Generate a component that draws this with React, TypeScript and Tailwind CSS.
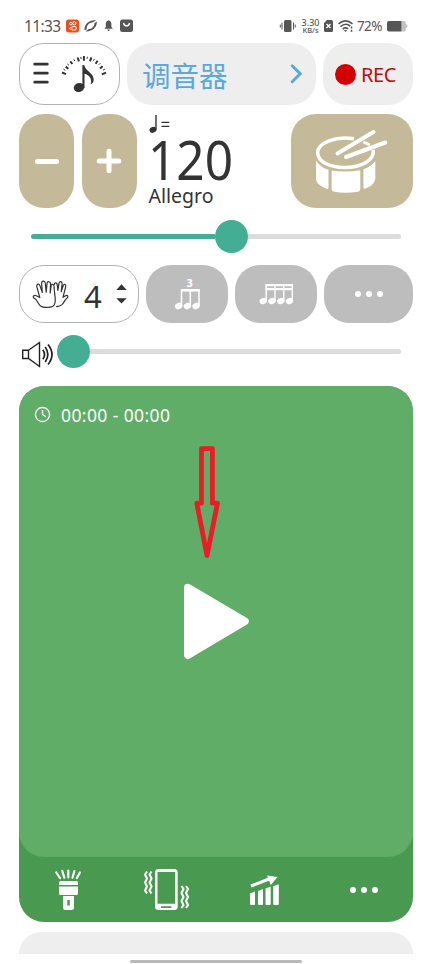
import type { ReactNode } from "react";
import clsx from "clsx";

type IconProps = {
  box: string;
  className: string;
  children: ReactNode;
};

// every drawing keeps its own coordinates, the box says which part is shown
function Icon({ box, className, children }: IconProps) {
  return (
    <svg viewBox={box} className={clsx("shrink-0", className)} fill="currentColor">
      {children}
    </svg>
  );
}

function StatusBar() {
  return (
    <div className="flex h-[43px] items-start pl-6 pt-4 text-[#565656]">
      <span className="w-[42px] whitespace-nowrap text-[15.5px] leading-5 tracking-[-0.65px]">11:33</span>
      <Icon box="66 16 70 20" className="h-5 w-[70px]">
        <rect x="66" y="19.5" width="13" height="13" rx="2.5" fill="#ef4d1b" />
        <g fill="none" stroke="white" strokeWidth="1">
          <circle cx="71" cy="23.6" r="1.3" />
          <circle cx="74.4" cy="23.3" r="1.6" />
          <rect x="71.8" y="26.6" width="4.4" height="3.4" rx="1" />
          <path d="M71.5 27.2 L69 28.4 L71.5 29.7" />
        </g>
        <path d="M84.5 30.5 C84 24 90 19.5 96 20.5 L93 22.3 C89 22.3 86.3 26 86.8 29.2Z M96.8 21.5 C97.3 27 92 32 85.5 31.4 L88.3 29.3 C92 29.3 94.6 26 94.4 23.3Z" />
        <path d="M108.6 20.2 C110.8 20.8 111.4 22.5 111.4 24.5 V27 L112.8 28.7 H104.4 L105.8 27 V24.5 C105.8 22.5 106.4 20.8 108.6 20.2Z M107.3 29.5 H109.9 L109.2 31 H108Z" />
        <rect x="120" y="19.5" width="13" height="12.5" rx="2.5" />
        <path d="M123.5 23 C124.5 26.8 128.7 26.8 129.6 23" fill="none" stroke="white" strokeWidth="1.4" />
      </Icon>
      <Icon box="279 16 18 20" className="ml-[143px] h-5 w-[18px]">
        <rect x="284" y="20" width="7.5" height="12" rx="1.5" />
        <path d="M282 22.5 V29.5 M280.3 24.5 V27.5 M293.5 22.5 V29.5 M295.2 24.5 V27.5" stroke="currentColor" strokeWidth="1" />
      </Icon>
      <div className="ml-[2px] mt-[1.5px] w-[23px] whitespace-nowrap text-center text-[9px] font-medium leading-[9px]">
        <div>3.30</div>
        <div className="text-[7.5px] leading-[7px]">KB/s</div>
      </div>
      <Icon box="322 16 34 20" className="h-5 w-[34px]">
        <path d="M327 20 H331.5 Q333 20 333 21.5 V30.5 Q333 32 331.5 32 H325.5 Q324 32 324 30.5 V23Z" />
        <path d="M326.5 24 L330.5 28 M330.5 24 L326.5 28" stroke="white" strokeWidth="1.3" />
        <g fill="none" stroke="currentColor" strokeWidth="1.6">
          <path d="M338.5 23.8 Q345.5 17.8 352.5 23.8" />
          <path d="M340.5 26.6 Q345.5 22.3 350.3 26" />
          <path d="M342.7 29 Q345.5 26.8 348.2 28.8" />
        </g>
        <path d="M343.8 30 L345.5 32 L347.2 30Z" />
        <path d="M351.5 26.5 V31.8" stroke="currentColor" strokeWidth="1.6" strokeDasharray="2 1.2" />
      </Icon>
      <span className="ml-[1px] w-[29px] whitespace-nowrap text-[13.5px] leading-[21px] tracking-[-0.6px]">72%</span>
      <Icon box="386 16 22 20" className="h-5 w-[22px]">
        <path d="M403 21 H404 Q405.8 21 405.8 23 V24.3 Q407.5 24.5 407.5 26 Q407.5 27.8 405.8 28 V29.5 Q405.8 31.5 404 31.5 H401.5 V21Z" fill="#c2c2c2" />
        <path d="M389 21 H401.5 V31.5 H389 Q387 31.5 387 29.5 V23 Q387 21 389 21Z" />
      </Icon>
    </div>
  );
}

function Header() {
  return (
    <div className="flex h-[62px] gap-[7px]">
      <button className="flex w-[101px] items-center rounded-[25px] border-[1.5px] border-[#b3b3b3] pl-[9px] text-[#333]">
        <Icon box="29 48 84 52" className="h-[52px] w-[84px]">
          <path d="M34.7 64.2 H47.3 M34.7 73.2 H47.3 M34.7 82.2 H47.3" stroke="currentColor" strokeWidth="2.8" strokeLinecap="round" />
          <g stroke="currentColor">
            <path d="M62 72.5 L66 74.2 M65.7 66.6 L68.3 68.7 M70.3 61.3 L72.4 64 M77.6 57.5 L79 61.3 M83.9 56 V60.8 M91.4 57.3 L90 61.3 M97.6 60.8 L95.6 63.7 M102.6 66.2 L100 68.5 M106 72.6 L101.8 74.4" strokeWidth="2" />
            <path d="M73.8 59.3 L74.8 61 M80.8 57 L81.2 59 M87.4 56.8 L87 58.8 M94.4 59 L93.4 60.8 M67.5 64 L69 65.3 M100.2 63.3 L98.8 64.7 M63.5 69.2 L65.3 70.3 M104.8 69.2 L103 70.2" strokeWidth="1" />
          </g>
          <ellipse cx="79" cy="87.5" rx="5.3" ry="4.5" transform="rotate(-20 79 87.5)" />
          <path d="M82.4 65 H84.2 C85.2 71 93.7 73 93.7 79.5 Q93.7 83 90.7 84.2 C92.4 79 89.5 75 84.5 73.7 V88 H82.4Z" />
        </Icon>
      </button>
      <button className="flex w-[189px] items-center rounded-[25px] bg-[#eee] pl-[15px] text-[#5ba8dc]">
        <span className="w-[146px] pt-[3px] text-left text-[28.5px] leading-10">调音器</span>
        <Icon box="286 62 16 24" className="h-6 w-4">
          <path d="M290.2 65.8 L298.2 73.8 L290.2 81.8" fill="none" stroke="currentColor" strokeWidth="3" strokeLinecap="round" />
        </Icon>
      </button>
      <button className="flex w-[90px] items-center rounded-[25px] bg-[#eee] pl-3 text-[#c20c0c]">
        <span className="size-[21px] rounded-full bg-[#d40000]" />
        <span className="ml-[5px] pt-[2px] text-[20px] leading-6 tracking-[-0.4px]">REC</span>
      </button>
    </div>
  );
}

function Tempo() {
  return (
    <div className="mt-[9px] flex h-[94px]">
      <button className="flex w-[55px] items-center justify-center rounded-[25px] bg-[#c4ba9a]">
        <span className="h-[5px] w-6 rounded-full bg-white" />
      </button>
      <button className="ml-[7.5px] flex w-[55px] items-center justify-center rounded-[25px] bg-[#c4ba9a] text-white">
        <Icon box="0 0 26 26" className="size-[26px]">
          <path d="M3.2 13 H22.8 M13 3.2 V22.8" stroke="currentColor" strokeWidth="5" strokeLinecap="round" />
        </Icon>
      </button>
      <div className="ml-3 w-[142px] text-[#333]">
        <Icon box="148 114 22 20" className="h-5 w-[22px]">
          <ellipse cx="152" cy="129.8" rx="3.6" ry="2.9" transform="rotate(-20 152 129.8)" />
          <path d="M155 115 V129.5" stroke="currentColor" strokeWidth="1.4" />
          <path d="M160.5 122.3 H168.3 M160.5 126.3 H168.3" stroke="currentColor" strokeWidth="1.2" />
        </Icon>
        <div className="-ml-px -mt-px h-[53px] origin-left scale-x-[0.9] text-[55px] leading-[51px]">120</div>
        <div className="text-[19.5px] leading-5">Allegro</div>
      </div>
      <button className="flex w-[122.5px] items-center justify-center rounded-[25px] bg-[#c4ba9a] text-white">
        <Icon box="312 125 80 72" className="h-[72px] w-[80px]">
          <path d="M354 138.8 C336 135.5 317.7 143 317.7 152.5 C317.7 162 330 167.5 344.5 167.5 C362 167.5 374.5 160 373.2 150" fill="none" stroke="currentColor" strokeWidth="3.5" />
          <path d="M363.3 142 L369.7 144.8" stroke="currentColor" strokeWidth="3" />
          <path d="M337.5 153.5 L373.5 132 M346 157 L385.3 142.5" stroke="currentColor" strokeWidth="4" strokeLinecap="round" />
          <path d="M316 160.5 C318.5 165 322.5 167.8 328.5 169.8 V187.5 Q328.5 189.7 326.5 188.8 C319 185.5 316 182.5 316 178.5Z M331.6 170.5 Q345.5 172.6 360.3 170.2 V189 Q360.3 191.5 357.5 191.8 Q345.5 193.8 334 191.8 Q331.6 191.3 331.6 189Z M363.4 169.3 C369 167.2 373 164.5 375.3 161.2 V178 C375.3 182 372.2 186 365.5 188.6 Q363.4 189.4 363.4 187.3Z" />
        </Icon>
      </button>
    </div>
  );
}

function Slider({ value, className }: { value: number; className?: string }) {
  return (
    <div className={clsx("flex h-[33px] items-center", className)}>
      {value > 0 && <div className="h-[5px] rounded-l-full bg-[#43ae94]" style={{ width: value }} />}
      <div className="size-[33px] shrink-0 rounded-full bg-[#43ae94]" />
      <div className="h-[5px] flex-1 rounded-r-full bg-[#dcdcdc]" />
    </div>
  );
}

function Dots() {
  return (
    <div className="flex gap-[5px]">
      {[0, 1, 2].map((i) => (
        <span key={i} className="size-[6px] rounded-full bg-white" />
      ))}
    </div>
  );
}

function Beats() {
  return (
    <div className="mt-3 flex h-[58px] gap-[7px]">
      <button className="flex w-[120px] items-center rounded-[25px] border-[1.5px] border-[#b3b3b3] pl-[11px] text-[#333]">
        <Icon box="31 278 39 32" className="h-8 w-[39px]">
          <g fill="none" stroke="currentColor" strokeWidth="1.2" strokeLinejoin="round" strokeLinecap="round">
            <path d="M40.5 306 C38 303.5 37.5 301.5 36 299.5 L33.6 297.8 C32.4 296 34.5 295 36.3 295.7 L39.8 297.5 L36.8 286.6 C36.4 283.8 39.1 283.1 39.9 285.6 L42.3 292.5 L41.6 283.4 C41.6 280.4 45 280.3 45.3 283.2 L46.2 292.2 L47 283.6 C47.4 280.9 50.6 281.2 50.5 284 L50.2 293 L51.1 285.8 C51.7 283.5 54.2 284.2 54.1 286.6 C54 291.5 55.6 297 55.2 301.5 C54.8 305 53.8 306.5 51.5 306.8 C47 307.8 43 307.7 40.5 306Z" />
            <path d="M54.3 284.4 C54.4 282.2 56.8 282.3 57.2 284.4 L57.9 290.5 L59 283.2 C59.5 280.9 62.3 281.3 62.1 283.7 L61.2 291.8 L63.3 285.4 C64.2 283.5 66.2 284.5 65.7 286.6 L63 297.3 L66 295.6 C67.7 295.1 68.6 296.5 67.3 297.7 C64.8 299.5 64.2 302.5 61.9 304.6 C60 306.2 58.5 306.7 56.5 306.5" />
          </g>
        </Icon>
        <span className="ml-[14px] w-[31px] pt-1 text-left text-[31px] leading-[38px]">4</span>
        <Icon box="115 283 14 22" className="h-[22px] w-3.5">
          <path d="M116.3 290 L121.5 284.3 L126.7 290Z M116.3 298.3 H126.7 L121.5 303.5Z" />
        </Icon>
      </button>
      <button className="flex w-[82px] items-center justify-center rounded-[25px] bg-[#bdbdbd] text-white">
        <Icon box="173 271 28 46" className="h-[46px] w-7">
          <text x="186.5" y="287" fontSize="11" fontWeight="bold">3</text>
          <path d="M181.5 306 V290.2 H199 V306 M190.3 290 V306" fill="none" stroke="currentColor" strokeWidth="1.5" />
          <path d="M181 290.3 H199.7" stroke="currentColor" strokeWidth="2.5" />
          <ellipse cx="178.6" cy="306" rx="3.8" ry="3.1" transform="rotate(-25 178.6 306)" />
          <ellipse cx="187.4" cy="306" rx="3.8" ry="3.1" transform="rotate(-25 187.4 306)" />
          <ellipse cx="196" cy="306" rx="3.8" ry="3.1" transform="rotate(-25 196 306)" />
        </Icon>
      </button>
      <button className="flex w-[82px] items-center justify-center rounded-[25px] bg-[#bdbdbd] text-white">
        <Icon box="258 280 37 28" className="h-7 w-[37px]">
          <path d="M266.2 301 V284 M275 286 V301 M283.8 286 V301 M292.3 284 V301" stroke="currentColor" strokeWidth="1.4" />
          <path d="M265.5 285.2 H293 M265.5 289.2 H293" stroke="currentColor" strokeWidth="2.2" />
          <ellipse cx="263.2" cy="301" rx="3.8" ry="3" transform="rotate(-25 263.2 301)" />
          <ellipse cx="272" cy="301" rx="3.8" ry="3" transform="rotate(-25 272 301)" />
          <ellipse cx="280.8" cy="301" rx="3.8" ry="3" transform="rotate(-25 280.8 301)" />
          <ellipse cx="289.5" cy="301" rx="3.8" ry="3" transform="rotate(-25 289.5 301)" />
        </Icon>
      </button>
      <button className="flex flex-1 items-center justify-center rounded-[25px] bg-[#bdbdbd]">
        <Dots />
      </button>
    </div>
  );
}

function Player() {
  return (
    <div className="mt-[17.5px] h-[536.5px] overflow-hidden rounded-[25px] bg-[#4a9950] text-white">
      <div className="flex h-[471.5px] flex-col rounded-[25px] bg-[#60ad67]">
        <div className="mt-[17px] flex h-6 items-center pl-[15px]">
          <Icon box="0 0 17 17" className="size-[17px]">
            <path d="M8.5 1.5 A7 7 0 1 1 8.49 1.5Z M8.5 4 V8.5 L12 10.8" fill="none" stroke="currentColor" strokeWidth="1.3" />
          </Icon>
          <span className="ml-[10px] whitespace-pre text-[17.5px] leading-6 tracking-[0.4px]">00:00 - 00:00</span>
        </div>
        <Icon box="193 445 30 114" className="ml-[174px] mt-[18.5px] h-[114px] w-[30px]">
          <path d="M201.5 448.7 H212.4 V503.2 H217.5 L207 555.5 L196.8 503.2 H201.5Z" fill="none" stroke="#ea1c25" strokeWidth="4.8" strokeLinejoin="round" />
        </Icon>
        <Icon box="182 582 69 80" className="ml-[163px] mt-[23px] h-20 w-[69px]">
          <path d="M187.8 587.5 L245 621.3 L187.8 655.2Z" stroke="currentColor" strokeWidth="7.5" strokeLinejoin="round" />
        </Icon>
      </div>
      <div className="flex h-[65px] items-center">
        <div className="flex w-[98px] justify-center">
          <Icon box="54 868 28 44" className="h-11 w-7">
            <path d="M56.3 872.5 L60 878 M62.3 871 L64.3 877.7 M68.3 870.5 V877.5 M74.4 871 L72.5 877.7 M80 872.5 L76.8 878" stroke="currentColor" strokeWidth="2.2" strokeLinecap="round" />
            <path d="M60.5 881 H76.5 Q78 881 78 882.5 V885 H59 V882.5 Q59 881 60.5 881Z M59 886.4 H78 V893.5 Q78 895 76.5 895 H60.5 Q59 895 59 893.5Z" />
            <path d="M63 896 H74 V907.5 Q74 910 71.5 910 H65.5 Q63 910 63 907.5Z M67.3 900 V905.5 H69.8 V900Z" fillRule="evenodd" />
          </Icon>
        </div>
        <div className="flex w-[98px] justify-center">
          <Icon box="143 868 48 44" className="h-11 w-12">
            <path d="M159.5 869 H175 Q178.7 869 178.7 872.5 V906.5 Q178.7 910 175 910 H159.5 Q156 910 156 906.5 V872.5 Q156 869 159.5 869Z M158.5 872 V903.8 H176.2 V872Z M162 906.3 V908 H172.5 V906.3Z" fillRule="evenodd" />
            <g fill="none" stroke="currentColor" strokeWidth="2.1" strokeLinejoin="round">
              <path d="M148 871.5 l-2 3 l2 4 l-2 4 l2 4 l-2 4 l2 3 M152.5 871.5 l-2 3 l2 4 l-2 4 l2 4 l-2 4 l2 3" />
              <path d="M182.5 886 l2 3 l-2 4 l2 4 l-2 4 l2 4 l-2 3 M187 886 l2 3 l-2 4 l2 4 l-2 4 l2 4 l-2 3" />
            </g>
          </Icon>
        </div>
        <div className="flex w-[99px] justify-center">
          <Icon box="249 868 34 44" className="h-11 w-[34px]">
            <path d="M252 886 L272.5 878" stroke="currentColor" strokeWidth="3" />
            <path d="M268 875.5 L278.5 877 L271.8 885Z" />
            <path d="M251 893.5 L256 891.5 V904 Q256 905 255 905 H252 Q251 905 251 904Z M259 891 L264 889 V904 Q264 905 263 905 H260 Q259 905 259 904Z M266.5 888.5 L271.7 886.5 V904 Q271.7 905 270.7 905 H267.5 Q266.5 905 266.5 904Z M274.2 886.3 L279.8 884.2 V904 Q279.8 905 278.8 905 H275.2 Q274.2 905 274.2 904Z" />
          </Icon>
        </div>
        <div className="flex flex-1 justify-center">
          <Dots />
        </div>
      </div>
    </div>
  );
}

export default function App() {
  return (
    <div className="flex h-[964px] w-[432px] flex-col overflow-hidden bg-white font-['Noto_Sans','Noto_Sans_CJK_SC',sans-serif]">
      <StatusBar />
      <div className="px-[19px]">
        <Header />
        <Tempo />
        <Slider value={184} className="mx-3 mt-3" />
        <Beats />
        <div className="mt-3 flex h-[33px]">
          <Icon box="19 335 38 33" className="h-[33px] w-[38px] text-[#222]">
            <g fill="none" stroke="currentColor" strokeWidth="1.4">
              <path d="M28.5 350.3 L39.5 342.5 V366.5 L28.5 358.5 H22.7 V350.3Z M28.5 350.3 V358.5" />
              <path d="M42.8 349.8 Q46.3 354.5 42.8 359.2 M45.2 347 Q50.5 354.5 45.2 362 M48 344.5 Q56 354.5 48 364.5" strokeWidth="1.7" />
            </g>
          </Icon>
          <Slider value={0} className="mr-3 flex-1" />
        </div>
        <Player />
        <div className="mt-[10px] h-[22px] rounded-t-[25px] bg-[#eee]" />
      </div>
      <div className="mx-auto mt-[6px] h-[3px] w-[172px] rounded-full bg-[#b9b9b9]" />
    </div>
  );
}
